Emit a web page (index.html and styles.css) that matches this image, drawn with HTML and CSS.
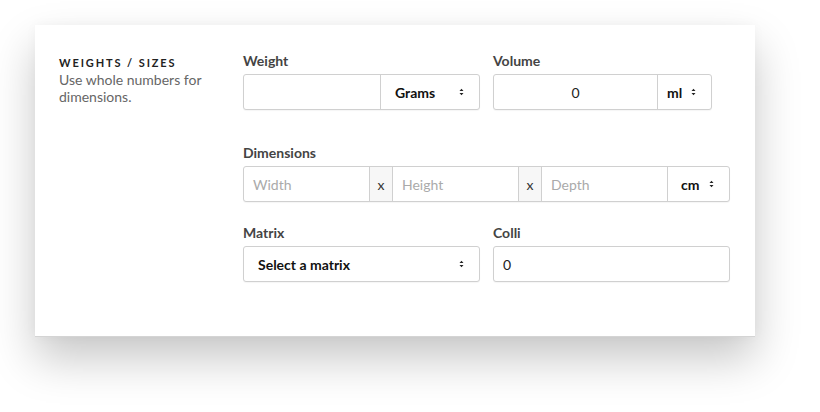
FILE: index.html
```html
<!DOCTYPE html>
<html>
<head>
<meta charset="utf-8">
<link rel="stylesheet" href="styles.css">
</head>
<body>
<div class="card">
  <div class="intro">
    <div class="intro-title">WEIGHTS / SIZES</div>
    <div class="intro-desc">Use whole numbers for dimensions.</div>
  </div>
  <div class="form">
    <div class="row row-first">
      <div class="field">
        <div class="label">Weight</div>
        <div class="group">
          <div class="input grow"></div>
          <div class="select sel-grams"><span>Grams</span><svg class="arrows" width="5" height="8" viewBox="0 0 5 8"><path d="M0.5 3 L2.5 0.8 L4.5 3 Z M0.5 5 L2.5 7.2 L4.5 5 Z" fill="#222"/></svg></div>
        </div>
      </div>
      <div class="field">
        <div class="label">Volume</div>
        <div class="group vol">
          <div class="input grow center">0</div>
          <div class="select sel-ml"><span>ml</span><svg class="arrows" width="5" height="8" viewBox="0 0 5 8"><path d="M0.5 3 L2.5 0.8 L4.5 3 Z M0.5 5 L2.5 7.2 L4.5 5 Z" fill="#222"/></svg></div>
        </div>
      </div>
    </div>
    <div class="row row-dims">
      <div class="field wide">
        <div class="label">Dimensions</div>
        <div class="group">
          <div class="input dim ph">Width</div>
          <div class="addon">x</div>
          <div class="input dim ph">Height</div>
          <div class="addon">x</div>
          <div class="input dim ph">Depth</div>
          <div class="select sel-cm"><span>cm</span><svg class="arrows" width="5" height="8" viewBox="0 0 5 8"><path d="M0.5 3 L2.5 0.8 L4.5 3 Z M0.5 5 L2.5 7.2 L4.5 5 Z" fill="#222"/></svg></div>
        </div>
      </div>
    </div>
    <div class="row">
      <div class="field">
        <div class="label">Matrix</div>
        <div class="group">
          <div class="select single"><span>Select a matrix</span><svg class="arrows" width="5" height="8" viewBox="0 0 5 8"><path d="M0.5 3 L2.5 0.8 L4.5 3 Z M0.5 5 L2.5 7.2 L4.5 5 Z" fill="#222"/></svg></div>
        </div>
      </div>
      <div class="field">
        <div class="label">Colli</div>
        <div class="group">
          <div class="input grow solo">0</div>
        </div>
      </div>
    </div>
  </div>
</div>
</body>
</html>
```

FILE: styles.css
```css
html, body {
  margin: 0;
  padding: 0;
  background: #fff;
}
body {
  font-family: Lato, "Liberation Sans", sans-serif;
  width: 820px;
  height: 412px;
  overflow: hidden;
}
.card {
  margin: 25px 0 0 35px;
  width: 720px;
  height: 312px;
  box-sizing: border-box;
  background: #fff;
  border-bottom: 1px solid #d4d4d4;
  box-shadow: 0 22px 42px rgba(0, 0, 0, 0.22), 0 0 12px rgba(0, 0, 0, 0.03);
  display: flex;
  padding: 27px 0 0 24px;
}
.intro {
  width: 184px;
  padding-top: 4px;
}
.intro-title {
  font-size: 11px;
  font-weight: 700;
  letter-spacing: 1.9px;
  color: #222;
  line-height: 14px;
}
.intro-desc {
  font-size: 14px;
  color: #666;
  line-height: 17px;
  margin-top: 1px;
  width: 150px;
}
.form {
  display: flex;
  flex-direction: column;
  width: 487px;
}
.row {
  display: flex;
  gap: 13px;
}
.row-first {
  margin-bottom: 34px;
}
.row-dims {
  margin-bottom: 22px;
}
.field {
  width: 237px;
}
.field.wide {
  width: 487px;
}
.label {
  font-size: 14px;
  font-weight: 700;
  color: #444;
  line-height: 17px;
  margin-bottom: 5px;
}
.group {
  display: flex;
  height: 36px;
  box-sizing: border-box;
  border: 1px solid #d0d0d0;
  border-radius: 3px;
  background: #fff;
  box-shadow: 0 1px 1px rgba(0, 0, 0, 0.04);
}
.group.vol {
  width: 219px;
}
.input {
  font-size: 14px;
  color: #222;
  display: flex;
  align-items: center;
  padding: 0 9px;
  box-sizing: border-box;
}
.grow {
  flex: 1;
}
.center {
  justify-content: center;
}
.dim {
  flex: 1;
  min-width: 0;
}
.ph {
  color: #aaa;
}
.addon {
  width: 24px;
  background: #f7f7f7;
  border-left: 1px solid #d0d0d0;
  border-right: 1px solid #d0d0d0;
  display: flex;
  align-items: center;
  justify-content: center;
  font-size: 14px;
  color: #333;
  padding-top: 1px;
  box-sizing: border-box;
}
.select {
  display: flex;
  align-items: center;
  justify-content: space-between;
  border-left: 1px solid #d0d0d0;
  font-size: 14px;
  font-weight: 700;
  color: #111;
  box-sizing: border-box;
}
.sel-grams {
  width: 99px;
  padding: 0 15px 0 14px;
}
.sel-ml {
  width: 54px;
  padding: 0 15px 0 9px;
}
.sel-cm {
  width: 62px;
  padding: 0 15px 0 13px;
}
.select.single {
  flex: 1;
  border-left: none;
  padding: 0 15px 0 14px;
}
.arrows {
  display: block;
}
```
